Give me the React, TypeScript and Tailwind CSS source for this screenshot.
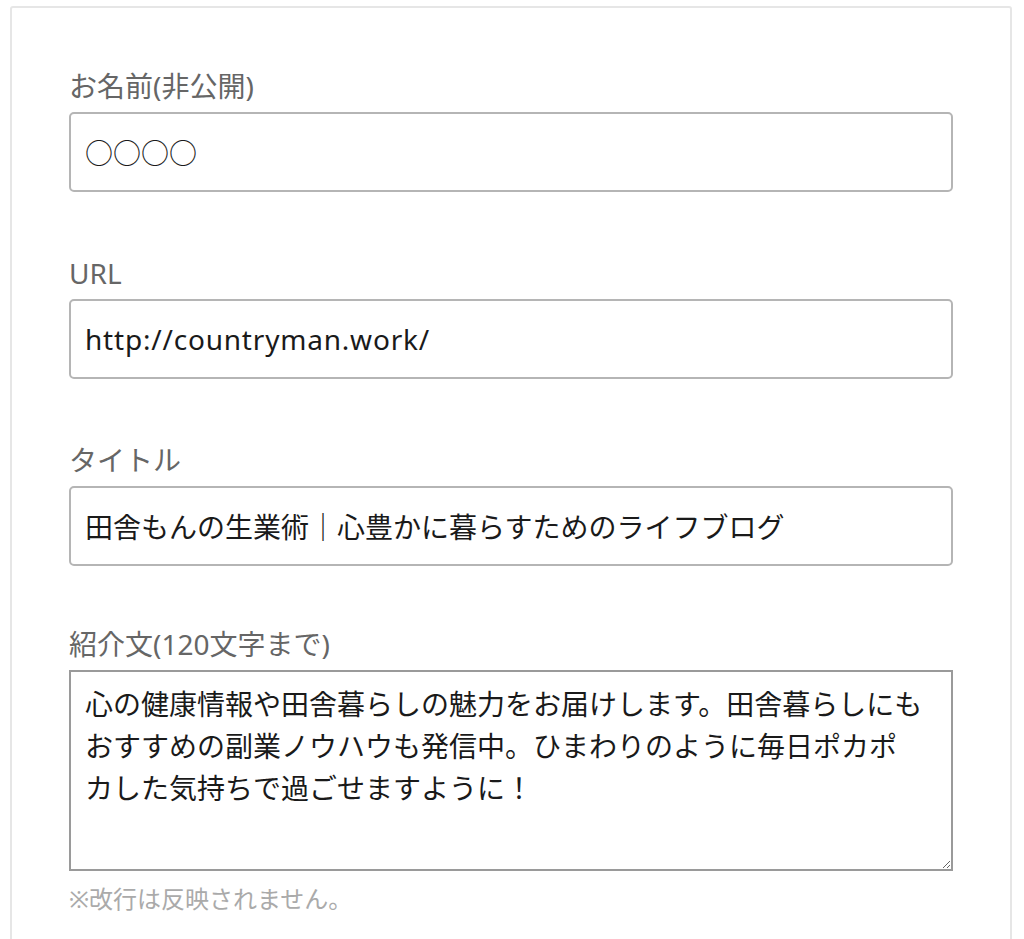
import type { ReactNode } from 'react';

const font = { fontFamily: '"Noto Sans", "Noto Sans CJK JP", sans-serif' };

function Field({ label, className, children }: { label: string; className?: string; children: ReactNode }) {
  return (
    <div className={className}>
      <div className="text-[28px] leading-[36px] text-[#666]">{label}</div>
      <div className="mt-2">{children}</div>
    </div>
  );
}

function TextInput({ value, wide }: { value: string; wide?: boolean }) {
  return (
    <input
      type="text"
      readOnly
      value={value}
      className={`block w-full h-[80px] px-[14px] border-2 border-[#b5b5b5] rounded-[5px] bg-white text-[28px] text-[#1a1a1a] outline-none ${wide ? 'tracking-[0.8px]' : ''}`}
      style={font}
    />
  );
}

export default function App() {
  // wrapped where the original textarea wraps
  const intro =
    '心の健康情報や田舎暮らしの魅力をお届けします。田舎暮らしにも\nおすすめの副業ノウハウも発信中。ひまわりのように毎日ポカポ\nカした気持ちで過ごせますように！';

  return (
    <div className="bg-white min-h-[939px] pt-[6px] pl-[10px] pr-[12px]" style={font}>
      <div className="border-2 border-[#e6e6e6] rounded-[3px] px-[57px] pt-[60px] pb-[80px]">
        {/* profile fields */}
        <Field label="お名前(非公開)">
          <TextInput value="○○○○" />
        </Field>

        <Field label="URL" className="mt-[63px]">
          <TextInput value="http://countryman.work/" wide />
        </Field>

        <Field label="タイトル" className="mt-[63px]">
          <TextInput value="田舎もんの生業術｜心豊かに暮らすためのライフブログ" />
        </Field>

        <Field label="紹介文(120文字まで)" className="mt-[60px]">
          <textarea
            readOnly
            value={intro}
            className="block w-full h-[201px] pt-[11px] px-[14px] border-2 border-[#9a9a9a] bg-white text-[28px] leading-[42px] text-[#1a1a1a] outline-none resize-y"
            style={font}
          />
        </Field>

        <p className="mt-[10px] text-[24px] leading-[36px] text-[#aaa]">※改行は反映されません。</p>
      </div>
    </div>
  );
}
